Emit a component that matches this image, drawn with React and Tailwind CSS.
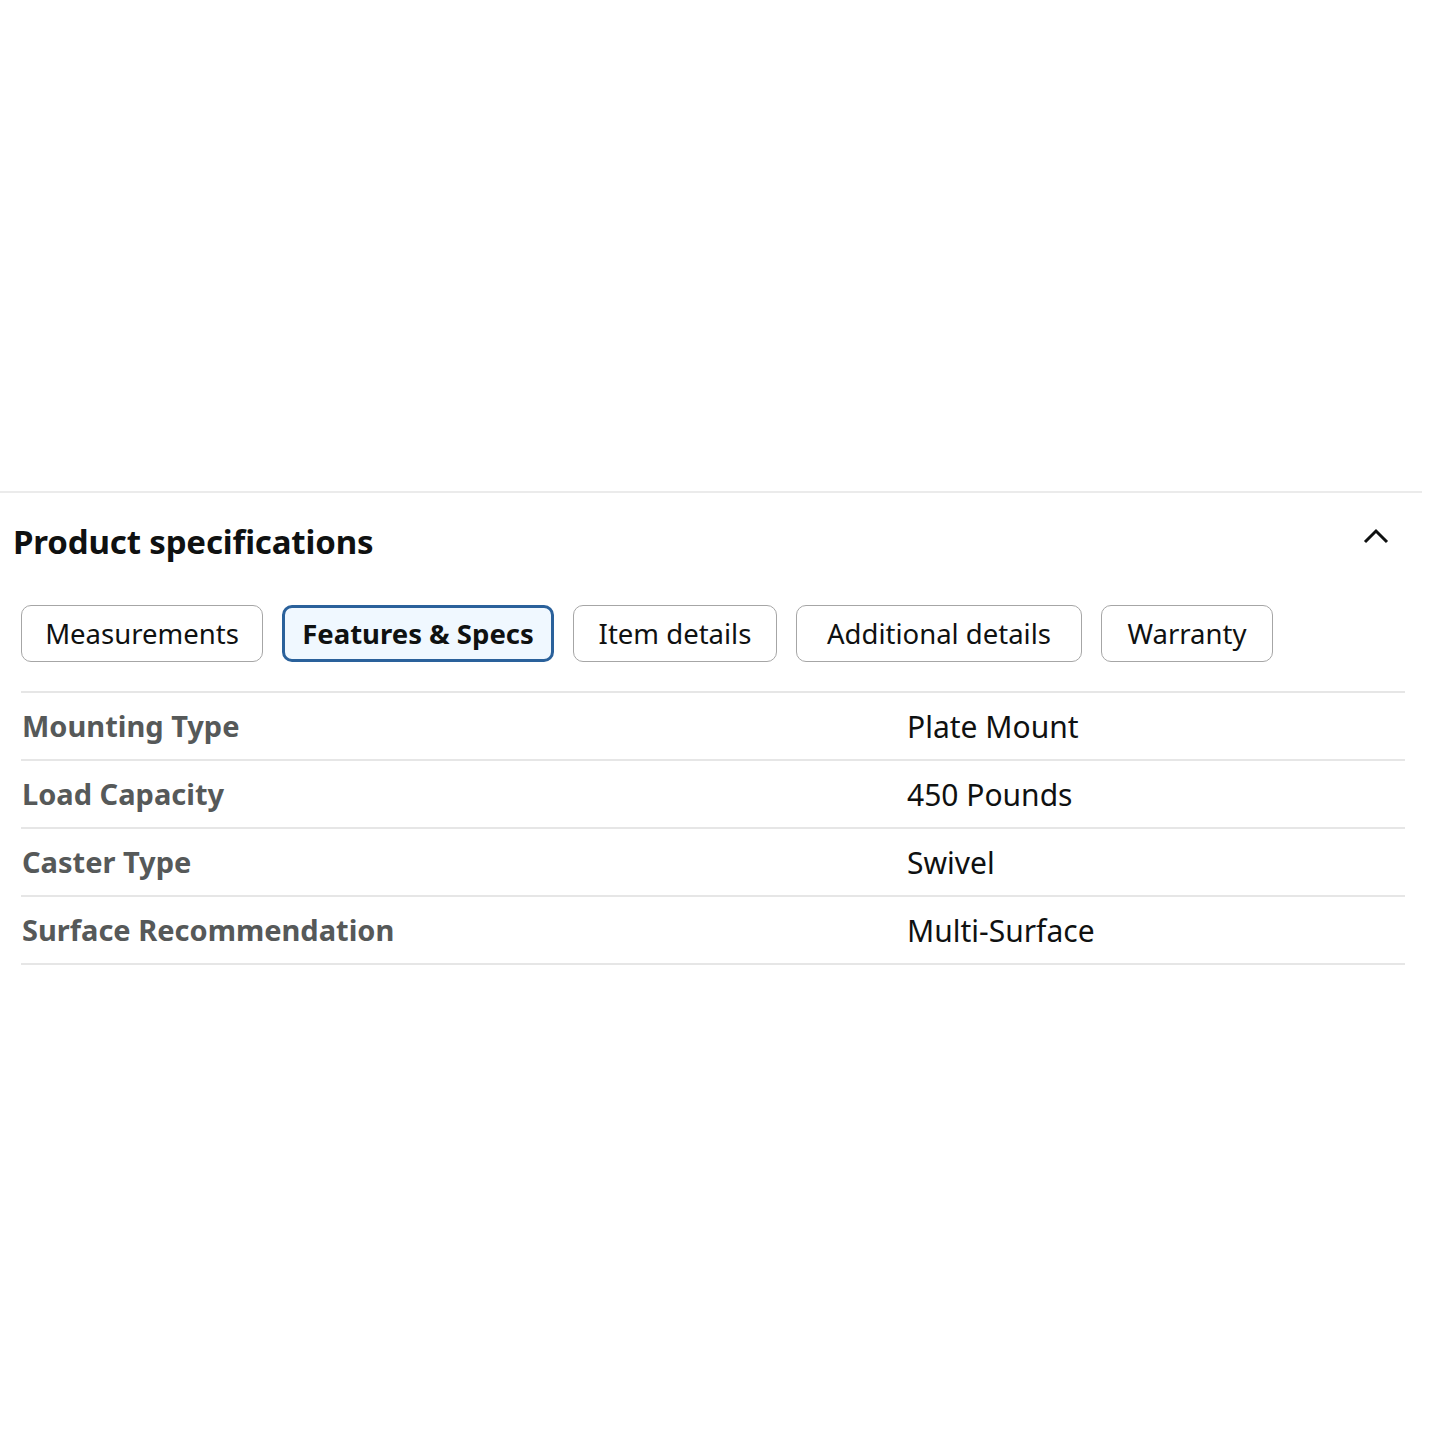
export default function App() {
  const tabs = [
    { label: "Measurements", w: "w-[242px]" },
    { label: "Features & Specs", w: "w-[272px]", active: true },
    { label: "Item details", w: "w-[204px]" },
    { label: "Additional details", w: "w-[286px]" },
    { label: "Warranty", w: "w-[172px]" },
  ];
  const rows = [
    ["Mounting Type", "Plate Mount"],
    ["Load Capacity", "450 Pounds"],
    ["Caster Type", "Swivel"],
    ["Surface Recommendation", "Multi-Surface"],
  ];
  return (
    <div className="w-[1445px] h-[1445px] bg-white font-['Noto_Sans',sans-serif] text-[#0f1111]">
      <div className="pt-[491px] w-[1422px]">
        <div className="border-t-2 border-[#ebebeb]" />
        <div className="flex items-center justify-between pl-[13px] pr-[33px] pt-[28px]">
          <h2 className="text-[33px] leading-[42px] font-bold tracking-[-0.15px]">Product specifications</h2>
          <svg width="26" height="16" viewBox="0 0 26 16" className="mt-[-12px]">
            <path d="M2 14 L13 3 L24 14" fill="none" stroke="#0f1111" strokeWidth="3" />
          </svg>
        </div>
        <div className="flex gap-[19px] pl-[21px] pt-[42px]">
          {tabs.map((t) => (
            <div
              key={t.label}
              className={`${t.w} h-[57px] flex items-center justify-center rounded-[10px] text-[27.5px] ${
                t.active
                  ? "border-[3px] border-[#2a619b] bg-[#f0f8ff] font-bold"
                  : "border border-[#a6a6a6] bg-white"
              }`}
            >
              {t.label}
            </div>
          ))}
        </div>
        <div className="ml-[21px] mr-[17px] mt-[29px] border-t-2 border-[#e6e6e6]">
          {rows.map(([k, v]) => (
            <div key={k} className="flex items-center h-[68px] border-b-2 border-[#e6e6e6]">
              <div className="w-[886px] pl-[1px] text-[29px] font-bold text-[#565959]">{k}</div>
              <div className="text-[30px]">{v}</div>
            </div>
          ))}
        </div>
      </div>
    </div>
  );
}
